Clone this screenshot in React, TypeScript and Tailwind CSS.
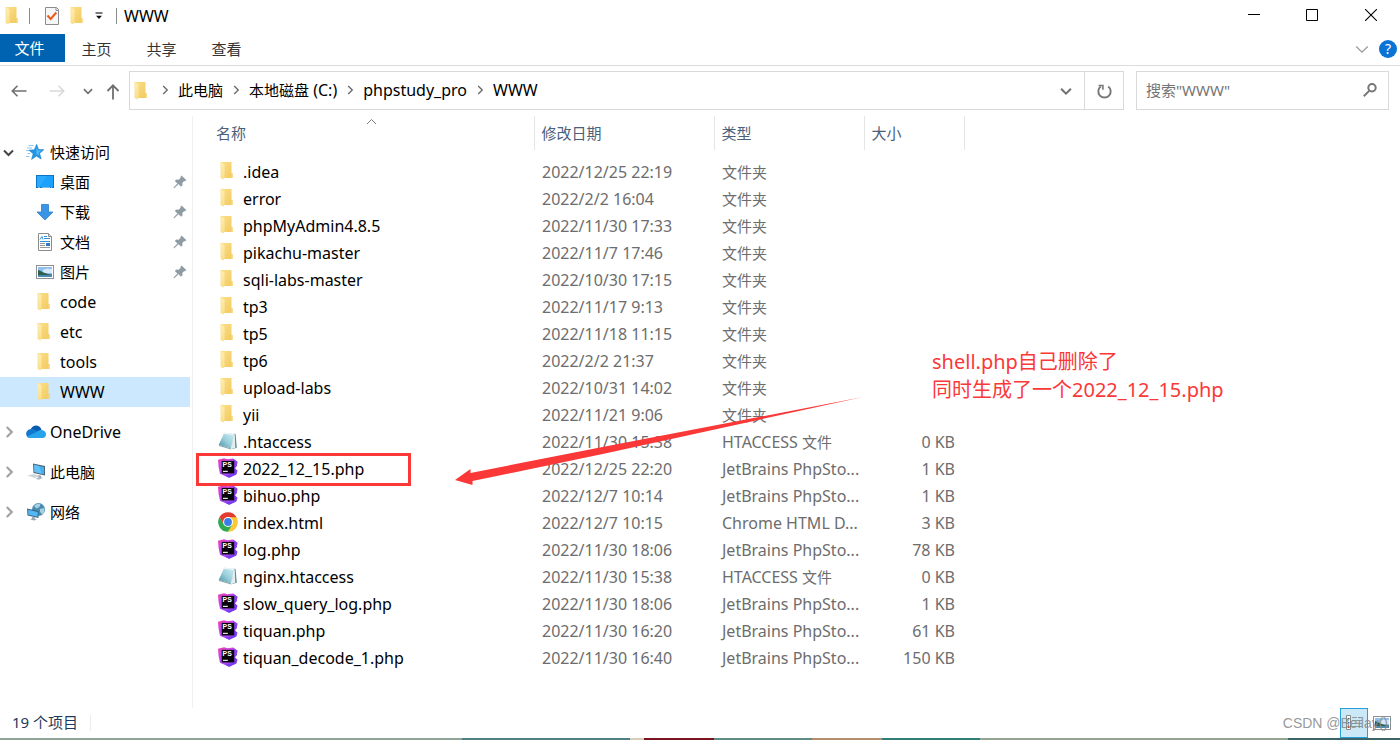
import React from "react";

const CJK = /([\u4e00-\u9fff]+)/;

/* Chinese runs are set one pixel smaller than the Latin runs beside them. */
function T({ children }: { children: string }) {
  return (
    <>
      {children.split(CJK).map((part, i) =>
        i % 2 ? (
          <span key={i} className="text-[15px]">
            {part}
          </span>
        ) : (
          part
        ),
      )}
    </>
  );
}

function FolderIcon() {
  return (
    <svg viewBox="0 0 20 20" className="size-5 shrink-0" aria-hidden="true">
      <defs>
        <linearGradient id="folderBack" x1="0" y1="0" x2="1" y2="1">
          <stop offset="0" stopColor="#fbe08a" />
          <stop offset="1" stopColor="#f2c95f" />
        </linearGradient>
        <linearGradient id="folderFront" x1="0" y1="0" x2="0" y2="1">
          <stop offset="0" stopColor="#fdedb2" />
          <stop offset="1" stopColor="#fadf8b" />
        </linearGradient>
      </defs>
      <path d="M2.500 1h11v11h1v5h-11z" fill="url(#folderBack)" />
      <path d="M12.900 12.200h1.600v4.800h-1.600z" fill="#f5d479" />
      <path d="M2.500 1l4 2.200v13L5.500 18.400 2.500 17z" fill="url(#folderFront)" />
    </svg>
  );
}

function PhpIcon() {
  return (
    <svg viewBox="0 0 20 20" className="size-5 shrink-0" aria-hidden="true">
      <defs>
        <linearGradient id="phpA" x1="0" y1="0" x2="0.7" y2="1">
          <stop offset="0" stopColor="#f03fb0" />
          <stop offset="0.45" stopColor="#c044ee" />
          <stop offset="1" stopColor="#8c4af8" />
        </linearGradient>
      </defs>
      <path d="M0 1.800L6 .3l3.500.9L15 .6l4.400 3.200-.6 4.200-1.800 2.200 2.400 2.600-1.200 3.600-7 3.400L2 15.800.6 9z" fill="url(#phpA)" />
      <path d="M15 .6l4.400 3.200-.6 4.200-2.600 2.600V3z" fill="#8445ee" />
      <path d="M16.200 10l3.200 2.800-1.200 3.600-7 3.400-4-2 8-2z" fill="#7b3df2" />
      <rect x="3.700" y="2.900" width="12.500" height="12.500" fill="#08040c" />
      <text x="4.600" y="8.800" fontSize="6.800" fontWeight="700" fontFamily="Liberation Sans, sans-serif" fill="#fff">
        PS
      </text>
      <path d="M5 12.800h4.800v1.100H5z" fill="#fff" />
    </svg>
  );
}

function NoteIcon() {
  return (
    <svg viewBox="0 0 20 20" className="size-5 shrink-0" aria-hidden="true">
      <defs>
        <linearGradient id="note" x1="0" y1="1" x2="1" y2="0">
          <stop offset="0" stopColor="#3f8ea3" />
          <stop offset="0.5" stopColor="#9bd0dc" />
          <stop offset="1" stopColor="#d3eef3" />
        </linearGradient>
      </defs>
      <path d="M15.800 2.500l1.800.8 1.200 13.400-5 1.600z" fill="#5c8793" />
      <path d="M15.400 3l1.400.4.5 13.600-3.800 1z" fill="#e4edf0" />
      <path d="M6.200 1.800l10 1L13 17.600.8 13.800z" fill="url(#note)" />
      <path d="M6.200 1.800l10 1-.3 1.200L5.600 3z" fill="#edf5f7" />
      <path d="M.8 13.800L13 17.600l.1.800L1 15z" fill="#8aa3ab" />
    </svg>
  );
}

function ChromeIcon() {
  return (
    <svg viewBox="0 0 20 20" className="size-5 shrink-0" aria-hidden="true">
      <circle cx="10" cy="10" r="9.800" fill="#fff" />
      <path d="M18.500 5.100A9.800 9.800 0 0 1 10 19.800L14.200 12.400 14.200 7.600 10 5.100z" fill="#fcc934" />
      <path d="M1.500 5.100A9.800 9.800 0 0 0 10 19.800L14.300 12.500 6 12.500z" fill="#2da94f" />
      <path d="M1.500 5.100L5.800 12.400 10 5.300h8.600A9.800 9.800 0 0 0 1.500 5.100z" fill="#e33b2e" />
      <circle cx="10" cy="10" r="4.900" fill="#fff" />
      <circle cx="10" cy="10" r="3.900" fill="#3b7de8" />
    </svg>
  );
}

function StarIcon() {
  return (
    <svg viewBox="0 0 20 20" className="size-5" aria-hidden="true">
      <path d="M3.500 3.500h5M2 6h5M1 8.500h3M2.500 11.500h3M1 14.500h3.500" stroke="#8ccaf4" />
      <path
        d="M11.600 2.400l2 5.200 5.200.1-4.200 3.600 1.600 5.700-4.800-3-4.800 3.400 1.600-5.700L4 8.200l5.400-.4z"
        fill="#1f97e8"
        stroke="#147ac4"
        strokeWidth=".6"
      />
      <path d="M11.600 4.400l1.400 4 3.400.2-2.900 2.300.8 2.800-3-2z" fill="#55b9f7" />
    </svg>
  );
}

function DesktopIcon() {
  return (
    <svg viewBox="0 0 20 20" className="size-5" aria-hidden="true">
      <rect x="1.500" y="3.500" width="17" height="12" fill="#1ba1fb" stroke="#0b74c4" />
      <path d="M2 4h10L4 15H2z" fill="#33b0ff" opacity=".6" />
      <path d="M3 15.500h2M7 15.500h8M16 15.500h1" stroke="#cfe9fb" strokeWidth=".6" />
    </svg>
  );
}

function DownloadIcon() {
  return (
    <svg viewBox="0 0 20 20" className="size-5" aria-hidden="true">
      <path d="M6.500 2.500h7V10h4.500L10 18 2 10h4.500z" fill="#3a96e4" stroke="#2b7fcb" strokeWidth=".8" />
    </svg>
  );
}

function DocumentIcon() {
  return (
    <svg viewBox="0 0 20 20" className="size-5" aria-hidden="true">
      <path d="M3.500 1.500h10l3 3v14h-13z" fill="#fff" stroke="#8c8c8c" />
      <path d="M13.500 1.500v3h3" fill="#ddd" stroke="#8c8c8c" />
      <path d="M5 7.500l2-3 1 3M9 4.500h3M9 6.500h6M5 9.500h10" fill="none" stroke="#2f8fd6" />
      <path d="M5 11.500h5M5 13.500h5M5 15.500h10" stroke="#9a9a9a" />
      <path d="M11 11h4v3h-4z" fill="#2f78c8" />
    </svg>
  );
}

function PictureIcon() {
  return (
    <svg viewBox="0 0 20 20" className="size-5" aria-hidden="true">
      <rect x="1.500" y="3.500" width="17" height="13" fill="#fff" stroke="#8f8f8f" />
      <path d="M3 5h14v10H3z" fill="#8fc0ee" />
      <path d="M8 8c3-2 6-1 9-1v4H8z" fill="#d5e8f8" />
      <path d="M3 8c4 1 6 4 14 4.500V13H3z" fill="#2f5f4c" />
      <path d="M3 13h14v2H3z" fill="#4b8bb0" />
    </svg>
  );
}

function OneDriveIcon() {
  return (
    <svg viewBox="0 0 20 20" className="size-5" aria-hidden="true">
      <path d="M4.500 7.500C7 2 13.500 2.500 15.500 7.500L10 12z" fill="#0a5cb0" />
      <path d="M4 7.200c3-1 5 .5 12 5L4 16C-1.500 15-.8 8 4 7.200z" fill="#1079cf" />
      <path d="M10.500 10c3-3.500 9.500-2.500 9.500 2.500 0 2-1.500 3.500-3.500 3.500H4c-1.500 0-2.500-.8-3-1.600z" fill="#26a3ea" />
    </svg>
  );
}

function ComputerIcon() {
  return (
    <svg viewBox="0 0 20 20" className="size-5" aria-hidden="true">
      <path d="M7 1.500l12 2.500v9.500L7.500 11z" fill="#4d6575" />
      <path d="M8 2.800l10 2.200v7.300L8.400 10z" fill="#41b0f3" />
      <path d="M8 2.800l5 1.100 3 8-7.600-1.900z" fill="#79cbf8" opacity=".6" />
      <path d="M12 13l3 .8v2.200l-3-.6z" fill="#8b98a0" />
      <path d="M1.500 13.500l6-1.500 7 2-6 2z" fill="#cfd5d9" />
      <path d="M9.500 16.500l5-1.500 2.500 1-4.500 1.800z" fill="#aeb8be" />
    </svg>
  );
}

function NetworkIcon() {
  return (
    <svg viewBox="0 0 20 20" className="size-5" aria-hidden="true">
      <circle cx="12.500" cy="7.500" r="6.500" fill="#4a8bb0" />
      <path d="M8 4c2-2.500 5-2.500 6.500-2l-1 3-3 1.500zM14 7l4-1c.8 2 .3 5-1.500 6.500L14 10z" fill="#a3d0e2" />
      <path d="M1 6.500l11.500 2.500v7L1.500 13.500z" fill="#3f6580" />
      <path d="M2 7.800l9.600 2.100v4.800L2.400 12.700z" fill="#4fb8f6" />
      <path d="M6 15l3 .6v1.400l2 .8-3 .7-4-1.200 2-.7z" fill="#9aa8b0" />
    </svg>
  );
}

function PinIcon() {
  return (
    <svg viewBox="0 0 14 14" className="size-3.5" aria-hidden="true">
      <path
        d="M8.600.8l4.600 4.400-1.400.9-.7-.2-2 2.100.2 2.300-1.200 1.200-2.600-2.500L1.300 13 .8 13l.2-.8L4.600 8.400 2 6l1.300-1.200 2.300.2 2.200-2.200-.2-.8z"
        fill="#8f9ba3"
        stroke="#8f9ba3"
        strokeWidth=".4"
      />
    </svg>
  );
}

type ChevronProps = { dir: "right" | "down" | "up"; className: string; width?: number };

function Chevron({ dir, className, width = 1.5 }: ChevronProps) {
  const paths = { right: "M3.500 1l4.500 4.500L3.500 10", down: "M1 3.500L5.500 8 10 3.500", up: "M1 8l4.500-4.500L10 8" };
  return (
    <svg viewBox="0 0 11 11" className={className} fill="none" stroke="currentColor" strokeWidth={width} aria-hidden="true">
      <path d={paths[dir]} />
    </svg>
  );
}

type Kind = "folder" | "note" | "php" | "chrome";
type Row = { name: string; date: string; type: string; size?: string; kind: Kind; marked?: boolean };

const icons: Record<Kind, React.ReactNode> = {
  folder: <FolderIcon />,
  note: <NoteIcon />,
  php: <PhpIcon />,
  chrome: <ChromeIcon />,
};

const folder = (name: string, date: string): Row => ({ name, date, type: "文件夹", kind: "folder" });
const php = (name: string, date: string, size: string, marked = false): Row => ({
  name,
  date,
  type: "JetBrains PhpSto...",
  size,
  kind: "php",
  marked,
});

const rows: Row[] = [
  folder(".idea", "2022/12/25 22:19"),
  folder("error", "2022/2/2 16:04"),
  folder("phpMyAdmin4.8.5", "2022/11/30 17:33"),
  folder("pikachu-master", "2022/11/7 17:46"),
  folder("sqli-labs-master", "2022/10/30 17:15"),
  folder("tp3", "2022/11/17 9:13"),
  folder("tp5", "2022/11/18 11:15"),
  folder("tp6", "2022/2/2 21:37"),
  folder("upload-labs", "2022/10/31 14:02"),
  folder("yii", "2022/11/21 9:06"),
  { name: ".htaccess", date: "2022/11/30 15:38", type: "HTACCESS 文件", size: "0 KB", kind: "note" },
  php("2022_12_15.php", "2022/12/25 22:20", "1 KB", true),
  php("bihuo.php", "2022/12/7 10:14", "1 KB"),
  { name: "index.html", date: "2022/12/7 10:15", type: "Chrome HTML D...", size: "3 KB", kind: "chrome" },
  php("log.php", "2022/11/30 18:06", "78 KB"),
  { name: "nginx.htaccess", date: "2022/11/30 15:38", type: "HTACCESS 文件", size: "0 KB", kind: "note" },
  php("slow_query_log.php", "2022/11/30 18:06", "1 KB"),
  php("tiquan.php", "2022/11/30 16:20", "61 KB"),
  php("tiquan_decode_1.php", "2022/11/30 16:40", "150 KB"),
];

const quick: { label: string; icon: React.ReactNode; pinned?: boolean; active?: boolean }[] = [
  { label: "桌面", icon: <DesktopIcon />, pinned: true },
  { label: "下载", icon: <DownloadIcon />, pinned: true },
  { label: "文档", icon: <DocumentIcon />, pinned: true },
  { label: "图片", icon: <PictureIcon />, pinned: true },
  { label: "code", icon: <FolderIcon /> },
  { label: "etc", icon: <FolderIcon /> },
  { label: "tools", icon: <FolderIcon /> },
  { label: "WWW", icon: <FolderIcon />, active: true },
];

const roots = [
  { label: "OneDrive", icon: <OneDriveIcon /> },
  { label: "此电脑", icon: <ComputerIcon /> },
  { label: "网络", icon: <NetworkIcon /> },
];

function TitleBar() {
  return (
    <header className="flex h-[34px] items-start">
      <div className="flex h-8 items-center">
        <span className="ml-[3px]">
          <FolderIcon />
        </span>
        <span className="ml-1.5 h-4 w-px bg-[#8a8a8a]" />
        <button aria-label="属性" className="ml-[13px]">
          <svg viewBox="0 0 18 20" className="h-5 w-[18px]" aria-hidden="true">
            <path d="M2.500 1.500h11l2 2v15h-13z" fill="#f4f6f8" stroke="#8b8b8b" />
            <path d="M13 1.500v3h3" fill="none" stroke="#8b8b8b" />
            <path d="M4.500 9.500l3.200 3.500 5.600-6.500" fill="none" stroke="#ea5b1c" strokeWidth="2" />
          </svg>
        </button>
        <button aria-label="新建文件夹" className="ml-[7px]">
          <FolderIcon />
        </button>
        <button aria-label="自定义快速访问工具栏" className="ml-px flex w-5 justify-center">
          <svg viewBox="0 0 8 8" className="size-2" aria-hidden="true">
            <path d="M.5 1h7" stroke="#222" strokeWidth="1.200" />
            <path d="M1 3.800h6L4 7z" fill="#111" />
          </svg>
        </button>
        <span className="ml-[7px] h-4 w-px bg-[#8a8a8a]" />
        <h1 className="ml-[7px]">WWW</h1>
      </div>
      <div className="ml-auto flex h-[30px]">
        <button aria-label="最小化" className="flex w-[58px] items-center justify-center">
          <svg viewBox="0 0 12 12" className="size-3" aria-hidden="true">
            <path d="M0 5.500h12" stroke="#000" />
          </svg>
        </button>
        <button aria-label="最大化" className="flex w-[58px] items-center justify-center">
          <svg viewBox="0 0 12 12" className="size-3" aria-hidden="true">
            <path d="M.5.500h11v11H.5z" fill="none" stroke="#000" />
          </svg>
        </button>
        <button aria-label="关闭" className="flex w-[59px] items-center justify-center">
          <svg viewBox="0 0 12 12" className="size-3" aria-hidden="true">
            <path d="M0 0l12 12M12 0L0 12" stroke="#000" strokeWidth="1.100" />
          </svg>
        </button>
      </div>
    </header>
  );
}

function Ribbon() {
  return (
    <div className="flex h-8 items-start border-b border-[#dcdcdc] text-[15px]">
      <button className="h-7 w-[65px] bg-[#0063b1] pr-1.5 text-white">文件</button>
      {["主页", "共享", "查看"].map((t) => (
        <button key={t} className="h-[30px] w-[65px] pr-0.5 text-[#333]">
          {t}
        </button>
      ))}
      <div className="ml-auto flex h-[30px] items-center gap-2.5 pr-[3px]">
        <button aria-label="展开功能区">
          <Chevron dir="down" className="size-3.5 text-[#9a9a9a]" width={1} />
        </button>
        <button
          aria-label="帮助"
          className="flex size-[18px] items-center justify-center rounded-full bg-[#0a74d6] text-sm text-white"
        >
          ?
        </button>
      </div>
    </div>
  );
}

function Crumb({ children }: { children: string }) {
  return (
    <li className="flex items-center">
      <span className="flex w-[26px] justify-center">
        <Chevron dir="right" className="size-2.5 text-[#6a6a6a]" />
      </span>
      <a href="#" className="whitespace-nowrap">
        <T>{children}</T>
      </a>
    </li>
  );
}

function AddressRow() {
  return (
    <div className="flex h-[50px] items-start pt-[5px] pr-[11px]">
      <div className="flex h-[39px] w-[129px] shrink-0 items-center text-[#6f6f6f]">
        <button aria-label="后退" className="flex w-[37px] justify-center">
          <svg viewBox="0 0 16 14" className="h-3.5 w-4" fill="none" stroke="currentColor" strokeWidth="1.600" aria-hidden="true">
            <path d="M1 7h14.500M6.500 1.800L1.300 7l5.200 5.200" />
          </svg>
        </button>
        <button aria-label="前进" className="flex w-[39px] justify-center text-[#d9d9d9]">
          <svg viewBox="0 0 16 14" className="h-3.5 w-4" fill="none" stroke="currentColor" strokeWidth="1.600" aria-hidden="true">
            <path d="M.5 7H15M9.500 1.800L14.700 7l-5.200 5.200" />
          </svg>
        </button>
        <button aria-label="最近位置" className="flex w-6 justify-center">
          <Chevron dir="down" className="size-2.5" width={1.8} />
        </button>
        <button aria-label="上移" className="flex w-[26px] justify-center pt-[3px]">
          <svg viewBox="0 0 14 16" className="h-4 w-3.5" fill="none" stroke="currentColor" strokeWidth="1.800" aria-hidden="true">
            <path d="M7 15.500V1.300M1.500 7L7 1.400 12.500 7" />
          </svg>
        </button>
      </div>
      <nav aria-label="地址" className="flex h-[39px] min-w-0 flex-1 items-center border border-[#d9d9d9] pl-0.5">
        <FolderIcon />
        <ol className="flex items-center pb-0.5">
          {["此电脑", "本地磁盘 (C:)", "phpstudy_pro", "WWW"].map((c) => (
            <Crumb key={c}>{c}</Crumb>
          ))}
        </ol>
        <button aria-label="历史记录" className="ml-auto flex w-9 justify-center text-[#6f6f6f]">
          <Chevron dir="down" className="size-3" width={1.8} />
        </button>
        <button
          aria-label="刷新"
          className="flex h-full w-[39px] items-center justify-center border-l border-[#d9d9d9] text-[#777]"
        >
          <svg viewBox="0 0 16 16" className="size-4" fill="none" stroke="currentColor" strokeWidth="1.900" aria-hidden="true">
            <path d="M12.200 3.400A6.200 6.200 0 1 1 4.800 3.400" />
            <path d="M2.600 2.500h4.300v4.300" strokeWidth="1.600" />
          </svg>
        </button>
      </nav>
      <form role="search" className="ml-3 flex h-[39px] w-[253px] items-center border border-[#d9d9d9] pr-[11px] pb-0.5 pl-[9px]">
        <input
          type="search"
          aria-label="搜索"
          placeholder={'搜索"WWW"'}
          className="min-w-0 flex-1 text-[15px] outline-none placeholder:text-[#757575]"
        />
        <button type="button" aria-label="开始搜索" className="text-[#767676]">
          <svg viewBox="0 0 14 14" className="size-3.5" fill="none" stroke="currentColor" strokeWidth="2" aria-hidden="true">
            <circle cx="9" cy="4.800" r="3.700" />
            <path d="M6.400 7.600L.8 13.200" />
          </svg>
        </button>
      </form>
    </div>
  );
}

function Sidebar() {
  return (
    <nav aria-label="导航窗格" className="w-[193px] shrink-0 border-r border-[#f0f0f0] pt-[21px]">
      <a href="#" className="flex h-[30px] items-center pl-[3px]">
        <Chevron dir="down" className="mr-[11px] size-[11px] text-[#444]" width={2} />
        <StarIcon />
        <span className="ml-[5px]">
          <T>快速访问</T>
        </span>
      </a>
      <ul>
        {quick.map((q) => (
          <li key={q.label}>
            <a
              href="#"
              className={
                q.active
                  ? "mr-0.5 flex h-[30px] items-center gap-[5px] bg-[#cce8ff] pr-[3px] pl-[35px]"
                  : "mr-0.5 flex h-[30px] items-center gap-[5px] pr-[3px] pl-[35px]"
              }
            >
              {q.icon}
              <T>{q.label}</T>
              {q.pinned && (
                <span className="ml-auto">
                  <PinIcon />
                </span>
              )}
            </a>
          </li>
        ))}
      </ul>
      <ul className="mt-2.5 flex flex-col gap-2.5">
        {roots.map((r) => (
          <li key={r.label}>
            <a href="#" className="flex h-[30px] items-center pl-[3px]">
              <Chevron dir="right" className="mr-[11px] size-3 text-[#a3a3a3]" width={2} />
              {r.icon}
              <span className="ml-1">
                <T>{r.label}</T>
              </span>
            </a>
          </li>
        ))}
      </ul>
    </nav>
  );
}

function FileTable() {
  return (
    <table className="w-[771px] table-fixed self-start text-left">
      <colgroup>
        <col className="w-[341px]" />
        <col className="w-[180px]" />
        <col className="w-[150px]" />
        <col className="w-[100px]" />
      </colgroup>
      <thead>
        <tr className="h-[34px] text-[15px] text-[#4c607a]">
          <th scope="col" className="relative border-r border-[#e5e5e5] p-0 pl-[23px] font-normal">
            <button>名称</button>
            <Chevron dir="up" className="absolute top-0 left-[173px] size-[11px] text-[#7a7a7a]" width={1} />
          </th>
          {["修改日期", "类型", "大小"].map((h) => (
            <th key={h} scope="col" className="border-r border-[#e5e5e5] p-0 pl-[7px] font-normal">
              <button>{h}</button>
            </th>
          ))}
        </tr>
      </thead>
      <tbody className="text-[#6d6d6d] before:block before:h-2">
        {rows.map((r) => (
          <tr key={r.name} className="h-[27px]">
            <td className="relative p-0 pl-[25px] text-black">
              <span className="flex h-[27px] items-center gap-[5px]">
                <span className="pb-0.5">{icons[r.kind]}</span>
                {r.name}
              </span>
              {r.marked && (
                <span className="absolute -top-0.5 left-[3px] z-10 h-[33px] w-[215px] border-3 border-[#fb3838]" />
              )}
            </td>
            <td className="p-0 pl-2 whitespace-nowrap">{r.date}</td>
            <td className="p-0 pl-2 whitespace-nowrap">
              <T>{r.type}</T>
            </td>
            <td className="p-0 pr-[9px] text-right whitespace-nowrap">{r.size}</td>
          </tr>
        ))}
      </tbody>
    </table>
  );
}

function StatusBar() {
  return (
    <footer className="relative flex h-[30px] items-center pl-3 text-[15px] text-[#1e395b]">
      <span className="pb-0.5">19 个项目</span>
      <span className="ml-3 h-4 w-px bg-[#ececec]" />
      <div className="ml-auto flex items-center gap-1 pr-2">
        <button
          aria-label="详细信息"
          className="flex h-[30px] w-7 items-center justify-center border border-[#26a0da] bg-[#cbe8f6]"
        >
          <svg viewBox="0 0 20 18" className="h-[18px] w-5" aria-hidden="true">
            <path d="M2.500 1.500h4v14h-4z" fill="#fff" stroke="#8a8a8a" />
            <path d="M4 4h1.500v1.500H4z" fill="#2c6e5a" />
            <path d="M4 8h1.500v1.500H4z" fill="#3d73b8" />
            <path d="M4 12h1.500v2H4z" fill="#c8371e" />
            <path d="M8 3.500h5M14 3.500h4M8 6.500h10M8 9.500h10M8 12.500h10" stroke="#8f9ba3" />
          </svg>
        </button>
        <button aria-label="大缩略图">
          <PictureIcon />
        </button>
      </div>
      <span className="absolute top-[3px] right-3 font-['Liberation_Sans',sans-serif] text-sm leading-6 text-[#8c8c8c]/90">
        CSDN @Beilay()
      </span>
    </footer>
  );
}

function Annotations() {
  return (
    <>
      <svg
        viewBox="0 0 410 90"
        className="pointer-events-none absolute top-[280px] left-[455px] h-[90px] w-[410px]"
        aria-hidden="true"
      >
        <path d="M0 84L15.500 73v4L150 50.500 408 1 150 57.500 17.500 85v4z" fill="#fb3838" />
      </svg>
      <p className="absolute top-[232px] left-[932px] text-[20px] leading-7 whitespace-nowrap text-[#fb3838]">
        shell.php自己删除了
        <br />
        同时生成了一个2022_12_15.php
      </p>
    </>
  );
}

export default function App() {
  return (
    <div className="flex min-h-screen flex-col overflow-hidden bg-white font-['Noto_Sans','Noto_Sans_CJK_SC',sans-serif] text-base leading-6 text-black">
      <TitleBar />
      <Ribbon />
      <AddressRow />
      <main className="relative flex flex-1">
        <Sidebar />
        <FileTable />
        <Annotations />
      </main>
      <StatusBar />
      <div className="flex h-0.5">
        <div className="w-[33%] bg-[#8fa596]" />
        <div className="w-[12%] bg-[#4f8084]" />
        <div className="w-[1%] bg-[#d8cdb8]" />
        <div className="w-[5%] bg-[#7c1420]" />
        <div className="w-[7%] bg-[#5f8d84]" />
        <div className="w-[5%] bg-[#b58e6d]" />
        <div className="w-[7%] bg-[#2f7f78]" />
        <div className="w-[22%] bg-[#94a592]" />
        <div className="flex-1 bg-[#3d6468]" />
      </div>
    </div>
  );
}
